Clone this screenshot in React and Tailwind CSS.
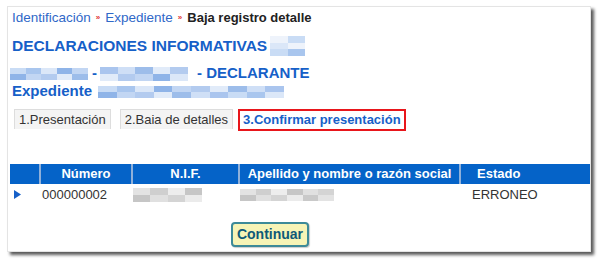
import React from "react";

function Blur({ w, h, colors, rows = 1 }) {
  const per = Math.ceil(colors.length / rows);
  const lines = [];
  for (let r = 0; r < rows; r++) {
    const row = [];
    for (let i = 0; i < per; i++) row.push(colors[(i + r * 3) % colors.length]);
    lines.push(row);
  }
  return (
    <span className="inline-flex flex-col align-middle blur-[0.7px]" style={{ width: w, height: h }}>
      {lines.map((row, r) => (
        <span key={r} className="flex flex-1">
          {row.map((c, i) => (
            <span key={i} className="flex-1 h-full" style={{ background: c }} />
          ))}
        </span>
      ))}
    </span>
  );
}

const blueA = ["#c9dcf5", "#a9c6ee", "#dbe7f8", "#8fb4e8", "#c2d6f3", "#b3cbef", "#e1ebf9", "#9dbdea", "#cfdff6", "#aac5ee"];
const grayA = ["#e3e3e3", "#cfcfcf", "#ededed", "#c6c6c6", "#e0e0e0", "#d4d4d4", "#ebebeb", "#c9c9c9"];

export default function App() {
  return (
    <div className="w-[600px] h-[260px] bg-white pt-[6px] pl-[7px]" style={{ fontFamily: '"Liberation Sans", Arial, sans-serif' }}>
      <div className="w-[584px] h-[246px] bg-white border border-[#e4e4e4] shadow-[3px_3px_3px_rgba(0,0,0,0.65)] pl-[4px] pt-[3px] relative">
        <div className="flex items-center text-[13.5px] h-[16px] gap-[5px]">
          <span className="text-[#2f68c8]">Identificación</span>
          <span className="text-[#e03030] text-[8px] font-bold">»</span>
          <span className="text-[#2f68c8]">Expediente</span>
          <span className="text-[#e03030] text-[8px] font-bold">»</span>
          <span className="font-bold text-[#222] text-[13px]">Baja registro detalle</span>
        </div>
        <div className="flex items-center mt-[10px] h-[20px] text-[15.5px] font-bold text-[#1660c8] gap-[3px]">
          <span>DECLARACIONES INFORMATIVAS</span>
          <Blur w={35} h={20} rows={3} colors={["#eef3fb", "#c9dcf5", "#a9c6ee", "#dbe7f8", "#eef3fb"]} />
        </div>
        <div className="flex items-center mt-[8px] h-[18px] text-[15px] font-bold text-[#1660c8]">
          <span className="ml-[-2px]"><Blur w={78} h={12} rows={2} colors={blueA} /></span>
          <span className="ml-[4px]">-</span>
          <span className="ml-[3px]"><Blur w={88} h={14} rows={2} colors={blueA.slice().reverse()} /></span>
          <span className="ml-[9px]">- DECLARANTE</span>
        </div>
        <div className="flex items-center h-[18px] text-[15px] font-bold text-[#1660c8]">
          <span>Expediente</span>
          <span className="ml-[6px]"><Blur w={186} h={12} rows={2} colors={blueA.concat(blueA)} /></span>
        </div>
        <div className="flex items-start mt-[9px] h-[22px] text-[13px]">
          <div className="ml-[2px] h-[20px] px-[4px] bg-[#f4f4f4] border-t border-x border-[#dddddd] text-[#333] flex items-center">1.Presentación</div>
          <div className="ml-[9px] h-[20px] px-[4px] bg-[#f4f4f4] border-t border-x border-[#dddddd] text-[#333] flex items-center">2.Baia de detalles</div>
          <div className="ml-[5px] h-[22px] px-[3px] border-2 border-[#e8161b] text-[#1660c8] font-bold flex items-center">3.Confirmar presentación</div>
        </div>
        <table className="mt-[33px] ml-[-2px] w-[580px] table-fixed border-collapse text-[13px] whitespace-nowrap">
          <thead>
            <tr className="bg-[#0563c8] text-white h-[20px]">
              <th className="w-[30px] border-r-2 border-[#8fb0da] p-0"></th>
              <th className="w-[92px] border-r-2 border-[#8fb0da] font-bold p-0">Número</th>
              <th className="w-[107px] border-r-2 border-[#8fb0da] font-bold p-0">N.I.F.</th>
              <th className="w-[221px] border-r-2 border-[#8fb0da] font-bold p-0">Apellido y nombre o razón social</th>
              <th className="font-bold text-left pl-[16px] p-0">Estado</th>
            </tr>
          </thead>
          <tbody>
            <tr className="h-[21px] text-[#333]">
              <td className="pl-[4px] p-0">
                <svg width="7" height="9" viewBox="0 0 7 9" className="block"><path d="M0 0 L7 4.5 L0 9 Z" fill="#1660c8" /></svg>
              </td>
              <td className="pl-[2px] p-0">000000002</td>
              <td className="pl-[1px] p-0"><Blur w={69} h={14} rows={2} colors={grayA} /></td>
              <td className="pl-[1px] p-0"><Blur w={94} h={12} rows={2} colors={grayA.concat(grayA.slice(0, 3))} /></td>
              <td className="pl-[12px] p-0">ERRONEO</td>
            </tr>
          </tbody>
        </table>
        <div className="mt-[17px] ml-[219px] w-[78px] h-[25px] rounded-[4px] border-2 border-[#3d8a98] bg-[#f7f4b6] text-[#0f5a78] font-bold text-[14px] flex items-center justify-center shadow-[1px_1px_1px_rgba(0,0,0,0.2)]">
          Continuar
        </div>
      </div>
    </div>
  );
}
